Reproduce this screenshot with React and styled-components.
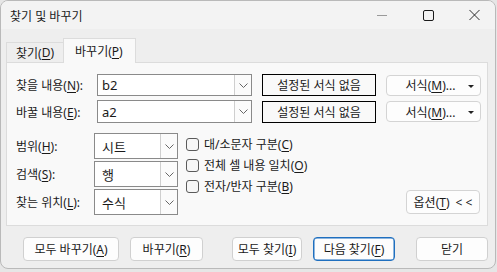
import styled, { createGlobalStyle } from "styled-components";

const GlobalStyle = createGlobalStyle`
    html, body {
        margin: 0;
        padding: 0;
        width: 497px;
        height: 272px;
        overflow: hidden;
        background: #e6e6e6;
        font-family: "Noto Sans", "Noto Sans CJK KR", sans-serif;
        font-size: 12px;
        color: #1a1a1a;
    }
    * {
        box-sizing: border-box;
    }
`;

const Mnemonic = ({ label, k, suffix = "" }) => (
    <>
        {label}({<U>{k}</U>}){suffix}
    </>
);

function Chevron() {
    return (
        <svg width="9" height="5" viewBox="0 0 9 5">
            <path d="M0.5 0.5 L4.5 4.5 L8.5 0.5" fill="none" stroke="#666" strokeWidth="1" />
        </svg>
    );
}

function Combo({ value, width, height, left }) {
    return (
        <ComboBox $width={width} $height={height} $left={left}>
            <ComboValue>{value}</ComboValue>
            <ComboArrow>
                <Chevron />
            </ComboArrow>
        </ComboBox>
    );
}

export default function App() {
    return (
        <>
            <GlobalStyle />
            <Window>
                <TitleBar>
                    <Title>찾기 및 바꾸기</Title>
                    <Controls>
                        <Control>
                            <svg width="11" height="11" viewBox="0 0 11 11">
                                <path d="M0 5.5 H10" stroke="#9a9a9a" strokeWidth="1" />
                            </svg>
                        </Control>
                        <Control>
                            <svg width="11" height="11" viewBox="0 0 11 11">
                                <rect x="0.5" y="0.5" width="10" height="10" rx="1.5" fill="none" stroke="#1a1a1a" strokeWidth="1" />
                            </svg>
                        </Control>
                        <Control>
                            <svg width="12" height="12" viewBox="0 0 12 12">
                                <path d="M0.5 0.5 L11.5 11.5 M11.5 0.5 L0.5 11.5" stroke="#1a1a1a" strokeWidth="1" />
                            </svg>
                        </Control>
                    </Controls>
                </TitleBar>

                <Body>
                    <Tabs>
                        <Tab>
                            <Mnemonic label="찾기" k="D" />
                        </Tab>
                        <Tab $active>
                            <Mnemonic label="바꾸기" k="P" />
                        </Tab>
                    </Tabs>

                    <Panel>
                        <SearchRow>
                            <Label>
                                <Mnemonic label="찾을 내용" k="N" suffix=":" />
                            </Label>
                            <Combo value="b2" width={155} height={22} left={4} />
                            <FormatPreview>설정된 서식 없음</FormatPreview>
                            <FormatButton>
                                <FormatText>
                                    <Mnemonic label="서식" k="M" suffix="..." />
                                </FormatText>
                                <Caret />
                            </FormatButton>
                        </SearchRow>
                        <SearchRow>
                            <Label>
                                <Mnemonic label="바꿀 내용" k="E" suffix=":" />
                            </Label>
                            <Combo value="a2" width={155} height={23} left={4} />
                            <FormatPreview>설정된 서식 없음</FormatPreview>
                            <FormatButton>
                                <FormatText>
                                    <Mnemonic label="서식" k="M" suffix="..." />
                                </FormatText>
                                <Caret />
                            </FormatButton>
                        </SearchRow>

                        <Options>
                            <Selects>
                                <SelectRow>
                                    <SmallLabel>
                                        <Mnemonic label="범위" k="H" suffix=":" />
                                    </SmallLabel>
                                    <Combo value="시트" width={84} height={26} left={7} />
                                </SelectRow>
                                <SelectRow>
                                    <SmallLabel>
                                        <Mnemonic label="검색" k="S" suffix=":" />
                                    </SmallLabel>
                                    <Combo value="행" width={84} height={26} left={7} />
                                </SelectRow>
                                <SelectRow>
                                    <SmallLabel>
                                        <Mnemonic label="찾는 위치" k="L" suffix=":" />
                                    </SmallLabel>
                                    <Combo value="수식" width={84} height={26} left={7} />
                                </SelectRow>
                            </Selects>

                            <Checks>
                                <Check>
                                    <Box />
                                    <span>
                                        <Mnemonic label="대/소문자 구분" k="C" />
                                    </span>
                                </Check>
                                <Check>
                                    <Box />
                                    <span>
                                        <Mnemonic label="전체 셀 내용 일치" k="O" />
                                    </span>
                                </Check>
                                <Check>
                                    <Box />
                                    <span>
                                        <Mnemonic label="전자/반자 구분" k="B" />
                                    </span>
                                </Check>
                            </Checks>

                            <OptionsButton>
                                <span>
                                    <Mnemonic label="옵션" k="T" />
                                </span>
                                <span>&lt; &lt;</span>
                            </OptionsButton>
                        </Options>
                    </Panel>

                    <Footer>
                        <Button $width={96}>
                            <Mnemonic label="모두 바꾸기" k="A" />
                        </Button>
                        <Button $width={73} $gap={11}>
                            <Mnemonic label="바꾸기" k="R" />
                        </Button>
                        <Button $width={70} $gap={29}>
                            <Mnemonic label="모두 찾기" k="I" />
                        </Button>
                        <Button $width={82} $gap={11} $focused>
                            <Mnemonic label="다음 찾기" k="F" />
                        </Button>
                        <Button $width={72} $gap={21}>
                            닫기
                        </Button>
                    </Footer>
                </Body>
            </Window>
        </>
    );
}

const Window = styled.div`
    width: 496px;
    height: 269px;
    display: flex;
    flex-direction: column;
    background: #eeeeee;
    border: 1px solid #b9b9b9;
    border-radius: 8px;
    overflow: hidden;
`;

const TitleBar = styled.div`
    height: 28px;
    flex-shrink: 0;
    display: flex;
    align-items: center;
    justify-content: space-between;
    background: #f3f3f3;
    padding-left: 9px;
`;

const Title = styled.div`
    font-size: 12px;
    color: #1a1a1a;
    margin-top: 1px;
`;

const Controls = styled.div`
    display: flex;
    align-items: center;
    height: 100%;
    padding-right: 15px;
    gap: 35px;
`;

const Control = styled.div`
    width: 11px;
    display: flex;
    align-items: center;
    justify-content: center;
`;

const Body = styled.div`
    flex: 1;
    display: flex;
    flex-direction: column;
    padding: 8px 7px 0 5px;
`;

const U = styled.span`
    text-decoration: underline;
    text-underline-offset: 2px;
`;

const Tabs = styled.div`
    display: flex;
    align-items: flex-end;
    height: 25px;
`;

const Tab = styled.div`
    height: ${(p) => (p.$active ? "25px" : "20px")};
    padding: ${(p) => (p.$active ? "0 12px 0 11px" : "0 9px")};
    display: flex;
    align-items: center;
    background: ${(p) => (p.$active ? "#f9f9f9" : "#eeeeee")};
    border: 1px solid #dcdcdc;
    border-bottom: none;
    border-right: ${(p) => (p.$active ? "1px solid #dcdcdc" : "none")};
    margin-bottom: ${(p) => (p.$active ? "-1px" : "0")};
    position: relative;
    z-index: ${(p) => (p.$active ? 1 : 0)};
    font-size: 12px;
`;

const Panel = styled.div`
    height: 164px;
    background: #f9f9f9;
    border: 1px solid #dcdcdc;
    padding: 11px 0 0 9px;
    display: flex;
    flex-direction: column;
    gap: 4px;
`;

const SearchRow = styled.div`
    display: flex;
    align-items: center;
`;

const Label = styled.div`
    width: 81px;
    font-size: 12px;
`;

const ComboBox = styled.div`
    width: ${(p) => p.$width}px;
    height: ${(p) => p.$height}px;
    display: flex;
    background: #ffffff;
    border: 1px solid #8a8a8a;
    font-size: 13px;
    padding-left: ${(p) => p.$left}px;
`;

const ComboValue = styled.div`
    flex: 1;
    display: flex;
    align-items: center;
`;

const ComboArrow = styled.div`
    width: 17px;
    display: flex;
    align-items: center;
    justify-content: center;
    border-left: 1px solid #cfcfcf;
    background: #fbfbfb;
`;

const FormatPreview = styled.div`
    width: 114px;
    height: 22px;
    margin-left: 10px;
    border: 1px solid #000;
    display: flex;
    align-items: center;
    justify-content: center;
    font-size: 12px;
    background: #f9f9f9;
`;

const FormatButton = styled.div`
    width: 95px;
    height: 21px;
    margin-left: 10px;
    display: flex;
    align-items: center;
    justify-content: center;
    position: relative;
    background: #fdfdfd;
    border: 1px solid #d4d4d4;
    border-radius: 4px;
    font-size: 12px;
`;

const FormatText = styled.span`
    margin-left: -6px;
`;

const Caret = styled.div`
    position: absolute;
    right: 6px;
    top: 9px;
    width: 0;
    height: 0;
    border-left: 3px solid transparent;
    border-right: 3px solid transparent;
    border-top: 3px solid #222;
`;

const Options = styled.div`
    display: flex;
    margin-top: 6px;
`;

const Selects = styled.div`
    display: flex;
    flex-direction: column;
    gap: 2px;
`;

const SelectRow = styled.div`
    display: flex;
    align-items: center;
`;

const SmallLabel = styled.div`
    width: 78px;
    font-size: 12px;
`;

const Checks = styled.div`
    display: flex;
    flex-direction: column;
    gap: 5px;
    margin-left: 8px;
    padding-top: 3px;
`;

const Check = styled.div`
    display: flex;
    align-items: center;
    height: 16px;
    gap: 5px;
    font-size: 12px;
`;

const Box = styled.span`
    width: 13px;
    height: 13px;
    flex-shrink: 0;
    border: 1px solid #5a5a5a;
    border-radius: 3px;
    background: #f6f6f6;
`;

const OptionsButton = styled.div`
    margin-left: auto;
    margin-right: 7px;
    align-self: flex-end;
    margin-bottom: 1px;
    width: 74px;
    height: 24px;
    display: flex;
    align-items: center;
    justify-content: center;
    gap: 6px;
    background: #fdfdfd;
    border: 1px solid #d4d4d4;
    border-radius: 4px;
    font-size: 12px;
`;

const Footer = styled.div`
    display: flex;
    padding: 11px 0 0 17px;
`;

const Button = styled.div`
    width: ${(p) => p.$width}px;
    height: 24px;
    margin-left: ${(p) => p.$gap || 0}px;
    display: flex;
    align-items: center;
    justify-content: center;
    background: #fdfdfd;
    border: 1px solid ${(p) => (p.$focused ? "#1f6fbf" : "#d0d0d0")};
    box-shadow: ${(p) => (p.$focused ? "inset 0 0 0 0.5px #1f6fbf" : "none")};
    border-radius: 4px;
    font-size: 12px;
`;
